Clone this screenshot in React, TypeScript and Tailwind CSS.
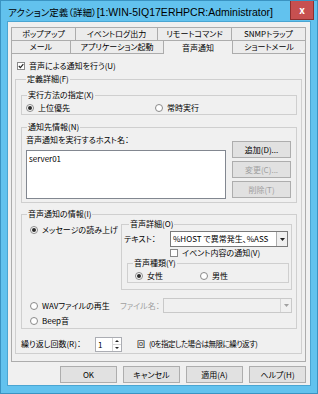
import React from 'react';

const row1 = [
  { label: 'ポップアップ', w: 64 },
  { label: 'イベントログ出力', w: 82 },
  { label: 'リモートコマンド', w: 74 },
  { label: 'SNMPトラップ', w: 75 },
];

const row2 = [
  { label: 'メール', w: 59 },
  { label: 'アプリケーション起動', w: 93 },
  { label: '音声通知', w: 69, active: true },
  { label: 'ショートメール', w: 74 },
];

const Radio = ({ checked, label, disabled }: { checked?: boolean; label: string; disabled?: boolean }) => (
  <span className="flex items-center gap-[4px] h-[10px]">
    <span className="w-[8px] h-[8px] rounded-full border border-[#8a8a8a] bg-white flex items-center justify-center shrink-0">
      {checked && <span className="w-[4px] h-[4px] rounded-full bg-[#2b2b2b]" />}
    </span>
    <span className={disabled ? 'text-[#a0a0a0]' : ''}>{label}</span>
  </span>
);

const Check = ({ checked, label }: { checked?: boolean; label: string }) => (
  <span className="flex items-center gap-[4px] h-[10px]">
    <span className="w-[8px] h-[8px] border border-[#8a8a8a] bg-white flex items-center justify-center shrink-0">
      {checked && (
        <svg width="6" height="6" viewBox="0 0 6 6">
          <path d="M0.8 3 L2.4 4.6 L5.3 1.2" stroke="#222" strokeWidth="1.2" fill="none" />
        </svg>
      )}
    </span>
    <span>{label}</span>
  </span>
);

const Group = ({ title, className, children }: { title: string; className?: string; children: React.ReactNode }) => (
  <fieldset className={`border border-[#cfcfcf] ${className ?? ''}`}>
    <legend className="ml-[5px] px-[1px] leading-[10px] h-[10px]">{title}</legend>
    {children}
  </fieldset>
);

const Btn = ({ label, disabled, className }: { label: string; disabled?: boolean; className?: string }) => (
  <div
    className={`h-[17px] border border-[#adadad] bg-[#e1e1e1] flex items-center justify-center ${
      disabled ? 'text-[#a0a0a0]' : 'text-black'
    } ${className ?? ''}`}
  >
    {label}
  </div>
);

const Arrow = ({ color = '#222' }: { color?: string }) => (
  <svg width="5" height="3" viewBox="0 0 5 3">
    <path d="M0 0 H5 L2.5 3 Z" fill={color} />
  </svg>
);

export default function App() {
  return (
    <div className="w-[318px] h-[394px] bg-[#62c2ee] border border-[#3a93c2] flex flex-col font-['Noto_Sans_CJK_JP',sans-serif] [font-feature-settings:'palt'] text-[8px] leading-[10px] text-black overflow-hidden">
      {/* title bar */}
      <div className="h-[20px] flex items-start justify-between shrink-0">
        <span className="pl-[7px] pt-[5px] leading-[12px] whitespace-nowrap flex items-baseline">
          <span className="text-[9.5px]">アクション定義（詳細）</span>
          <span className="text-[10.5px] font-['Liberation_Sans',sans-serif]">[1:WIN-5IQ17ERHPCR:Administrator]</span>
        </span>
        <div className="w-[24px] h-[19px] mr-[3px] bg-[#c75050] border border-[#8c2f2f] border-t-0 flex items-center justify-center text-white text-[10px] font-bold leading-none">
          x
        </div>
      </div>

      {/* client */}
      <div className="mx-[6px] mb-[7px] flex-1 bg-[#f0f0f0] border border-[#4aa5d2] pl-[3px] pr-[4px] pt-[5px] flex flex-col">
        {/* tabs */}
        <div className="flex h-[13px]">
          {row1.map((t, i) => (
            <div
              key={t.label}
              style={{ width: t.w }}
              className={`shrink-0 border-t border-l border-[#acacac] bg-[#ececec] flex items-center justify-center ${
                i === row1.length - 1 ? 'border-r' : ''
              }`}
            >
              {t.label}
            </div>
          ))}
        </div>
        <div className="flex h-[14px]">
          {row2.map((t, i) => (
            <div
              key={t.label}
              style={{ width: t.w }}
              className={`shrink-0 border-t border-l border-[#acacac] flex items-center justify-center ${
                i === row2.length - 1 ? 'border-r' : ''
              } ${t.active ? 'bg-[#f0f0f0]' : 'bg-[#ececec] border-b'}`}
            >
              {t.label}
            </div>
          ))}
        </div>

        {/* tab panel */}
        <div className="w-[295px] border border-t-0 border-[#acacac] bg-[#f0f0f0] flex flex-col pt-[7px] pb-[7px]">
          <div className="pl-[5px]">
            <Check checked label="音声による通知を行う(U)" />
          </div>

          <Group title="定義詳細(F)" className="mt-[3px] ml-[3px] w-[287px] pl-[5px] pb-[1px]">
            <Group title="実行方法の指定(X)" className="mt-[6px] w-[276px] pb-[1px]">
              <div className="flex mt-[3px] pl-[4px]">
                <div className="w-[129px]">
                  <Radio checked label="上位優先" />
                </div>
                <Radio label="常時実行" />
              </div>
            </Group>

            <Group title="通知先情報(N)" className="mt-[7px] w-[276px] pb-[3px]">
              <div className="flex pl-[4px] mt-[3px]">
                <div className="flex flex-col w-[200px]">
                  <span>音声通知を実行するホスト名：</span>
                  <div className="mt-[5px] h-[49px] bg-white border border-[#828790] px-[2px] pt-[3px]">server01</div>
                </div>
                <div className="flex flex-col gap-[3px] ml-[6px] mt-[6px]">
                  <Btn label="追加(D)..." className="w-[59px]" />
                  <Btn label="変更(C)..." disabled className="w-[59px]" />
                  <Btn label="削除(T)" disabled className="w-[59px]" />
                </div>
              </div>
            </Group>

            <Group title="音声通知の情報(I)" className="mt-[6px] w-[276px] pb-[2px]">
              <div className="flex pl-[8px]">
                <div className="w-[91px] mt-[6px]">
                  <Radio checked label="メッセージの読み上げ" />
                </div>
                <Group title="音声詳細(O)" className="w-[171px] pl-[2px] pb-[6px]">
                  <div className="flex items-center h-[16px] mt-[2px]">
                    <span className="w-[46px]">テキスト：</span>
                    <div className="w-[118px] h-[16px] border border-[#7a7a7a] bg-white flex items-center">
                      <span className="flex-1 pl-[2px] whitespace-nowrap">%HOST で異常発生、%ASS</span>
                      <span className="w-[11px] h-full border-l border-[#acacac] bg-[#f0f0f0] flex items-center justify-center">
                        <Arrow />
                      </span>
                    </div>
                  </div>
                  <div className="pl-[46px] mt-[1px]">
                    <Check label="イベント内容の通知(V)" />
                  </div>
                  <Group title="音声種類(Y)" className="ml-[3px] w-[162px] pb-[1px]">
                    <div className="flex pl-[7px] mt-[3px]">
                      <div className="w-[65px]">
                        <Radio checked label="女性" />
                      </div>
                      <Radio label="男性" />
                    </div>
                  </Group>
                </Group>
              </div>
              <div className="flex items-center h-[15px] mt-[8px] pl-[8px]">
                <div className="w-[90px]">
                  <Radio label="WAVファイルの再生" />
                </div>
                <span className="w-[43px] text-[#a0a0a0]">ファイル名：</span>
                <div className="w-[129px] h-[15px] border border-[#c9c9c9] bg-[#f0f0f0] flex justify-end">
                  <span className="w-[11px] h-full border-l border-[#d5d5d5] flex items-center justify-center">
                    <Arrow color="#a0a0a0" />
                  </span>
                </div>
              </div>
              <div className="pl-[8px] mt-[3px]">
                <Radio label="Beep音" />
              </div>
            </Group>

            <div className="flex items-center h-[16px] mt-[7px]">
              <span className="w-[74px]">繰り返し回数(R)：</span>
              <div className="w-[27px] h-[15px] border border-[#abadb3] bg-white flex">
                <span className="flex-1 pl-[2px] leading-[13px]">1</span>
                <span className="w-[9px] flex flex-col border-l border-[#d5d5d5]">
                  <span className="flex-1 flex items-center justify-center border-b border-[#d5d5d5]">
                    <svg width="4" height="2" viewBox="0 0 4 2"><path d="M0 2 H4 L2 0 Z" fill="#222" /></svg>
                  </span>
                  <span className="flex-1 flex items-center justify-center">
                    <svg width="4" height="2" viewBox="0 0 4 2"><path d="M0 0 H4 L2 2 Z" fill="#222" /></svg>
                  </span>
                </span>
              </div>
              <span className="ml-[15px]">回</span>
              <span className="ml-[4px] text-[7.5px] tracking-[-0.5px]">(0を指定した場合は無限に繰り返す)</span>
            </div>
          </Group>
        </div>

        {/* dialog buttons */}
        <div className="flex justify-end gap-[6px] mt-[4px] w-[295px]">
          <Btn label="OK" className="w-[57px]" />
          <Btn label="キャンセル" className="w-[57px]" />
          <Btn label="適用(A)" className="w-[57px]" />
          <Btn label="ヘルプ(H)" className="w-[57px]" />
        </div>
      </div>
    </div>
  );
}
